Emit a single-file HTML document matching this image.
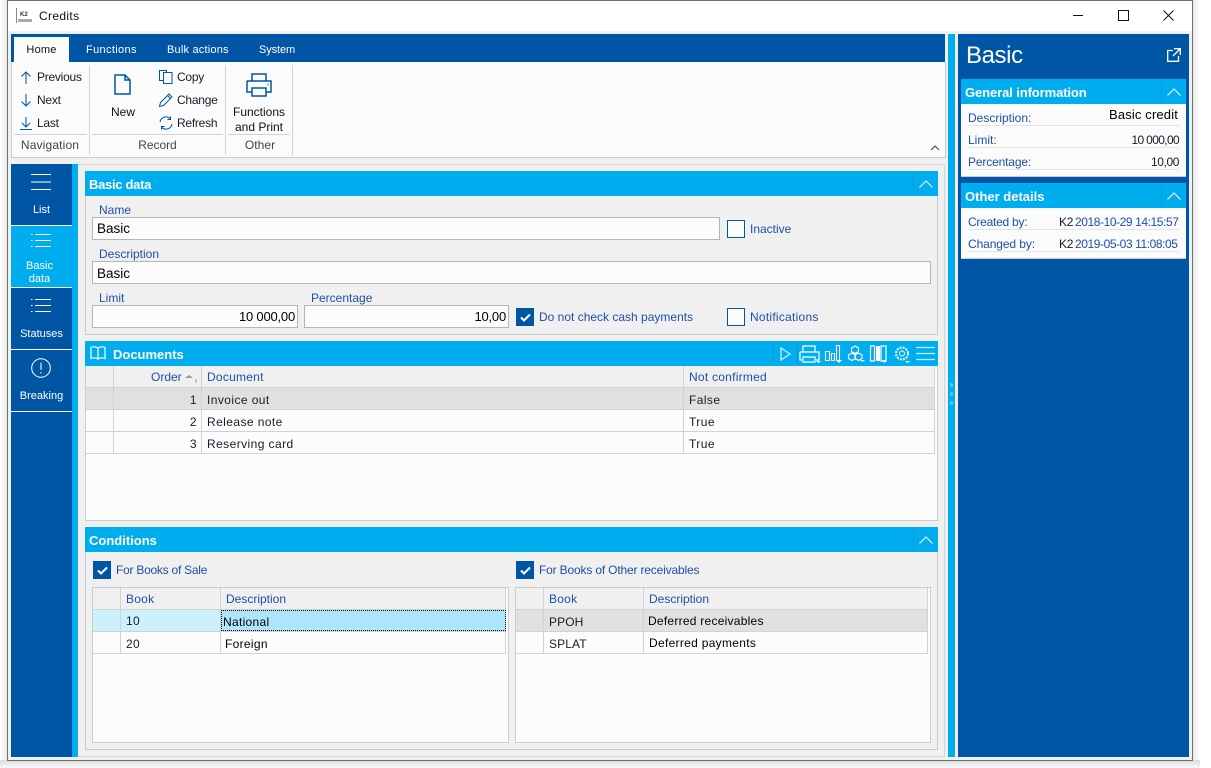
<!DOCTYPE html>
<html><head><meta charset="utf-8"><title>Credits</title>
<style>
html,body{margin:0;padding:0;width:1211px;height:768px;overflow:hidden;background:#fff}
body{position:relative;font-family:"Liberation Sans",sans-serif;font-size:12px;color:#111}
div,span,svg{position:absolute;box-sizing:border-box}
.t{white-space:nowrap;line-height:14px}
.l{color:#1f4fa8;letter-spacing:0}
.b{color:#1a1a2a;letter-spacing:.3px}
.d{letter-spacing:.42px}
.rb{color:#1a1a2a;letter-spacing:-.25px}
.w{color:#fff;letter-spacing:0}
.c{text-align:center}
.r{text-align:right}
.h{background:#00adef;color:#fff;font-weight:bold;font-size:13px;line-height:27px;padding-left:4px;letter-spacing:0}
.bx{border:1px solid #ccc}
.i{background:#fcfcfc;border:1px solid #b5b5b5;font-size:13.500px;line-height:21px;color:#000;padding:0 3px 0 4px;white-space:nowrap}
.n{font-size:13px;letter-spacing:-.2px;padding-right:2px}
.cb{width:18px;height:18px;border:1px solid #0055a5;background:#fcfcfc}
.cb.on{background:#0055a5}
.ln{background:#d2d2d2}
svg{overflow:visible;fill:none}
</style></head><body>

<!-- window frame -->
<div style="left:0;top:0;width:7px;height:768px;background:linear-gradient(90deg,#fff,#e8e8e8)"></div>
<div style="left:1192px;top:0;width:8px;height:768px;background:linear-gradient(90deg,#e8e8e8,#fff)"></div>
<div style="left:0;top:760px;width:1200px;height:8px;background:linear-gradient(#dcdcdc,#fafafa)"></div>
<div style="left:7px;top:0;width:1186px;height:761px;border:1px solid #6e6e6e;background:#f0f0f0"></div>
<div style="left:8px;top:1px;width:1184px;height:30px;background:#fff"></div>

<!-- title -->
<div style="left:16px;top:8px;width:1px;height:15px;background:#888"></div>
<div class="t" style="left:20px;top:11px;font-size:6px;font-weight:bold;color:#333;line-height:8px">K2</div>
<div style="left:18px;top:19px;width:14px;height:3px;background:#aaa"></div>
<div class="t" style="left:39px;top:9px;color:#111;font-size:12px;letter-spacing:.35px">Credits</div>
<div style="left:1073px;top:15px;width:10px;height:1px;background:#111"></div>
<div style="left:1118px;top:10px;width:11px;height:11px;border:1px solid #111"></div>
<svg style="left:1163px;top:10px" width="11" height="11"><path d="M.5.5l10 10M10.500.5l-10 10" stroke="#111"/></svg>

<!-- ribbon -->
<div style="left:11px;top:34px;width:934px;height:28px;background:#0055a5"></div>
<div style="left:14px;top:37px;width:55px;height:25px;background:#fbfbfb"></div>
<div class="t c" style="left:14px;top:43px;width:55px;font-size:11px;letter-spacing:.2px;color:#111">Home</div>
<div class="t w" style="left:86px;top:43px;font-size:11px;letter-spacing:.35px">Functions</div>
<div class="t w" style="left:167px;top:43px;font-size:11px;letter-spacing:.2px">Bulk actions</div>
<div class="t w" style="left:259px;top:43px;font-size:11px;letter-spacing:-.1px">System</div>
<div style="left:11px;top:62px;width:935px;height:96px;background:#fbfbfb;border:1px solid #ccc;border-top:0"></div>
<div class="ln" style="left:89px;top:65px;width:1px;height:90px"></div>
<div class="ln" style="left:225px;top:65px;width:1px;height:90px"></div>
<div class="ln" style="left:292px;top:65px;width:1px;height:90px"></div>
<div class="ln" style="left:14px;top:134px;width:73px;height:1px"></div>
<div class="ln" style="left:92px;top:134px;width:131px;height:1px"></div>
<div class="ln" style="left:228px;top:134px;width:62px;height:1px"></div>

<svg style="left:20px;top:71px" width="12" height="13"><path d="M6 13V1M1.500 5.500L6 1l4.500 4.500" stroke="#0055a5"/></svg>
<svg style="left:20px;top:94px" width="12" height="13"><path d="M6 0v12M1.500 7.500L6 12l4.500-4.500" stroke="#0055a5"/></svg>
<svg style="left:20px;top:117px" width="12" height="13"><path d="M6 0v10M2 6l4 4 4-4M0 12.500h12" stroke="#0055a5"/></svg>
<div class="t rb" style="left:37px;top:70px">Previous</div>
<div class="t rb" style="left:37px;top:93px">Next</div>
<div class="t rb" style="left:37px;top:116px">Last</div>
<div class="t c" style="left:11px;top:138px;width:78px;color:#444;letter-spacing:.15px">Navigation</div>

<svg style="left:114px;top:74px" width="17" height="21"><path d="M1 1h10l5 5v14H1zM11 1v5h5" stroke="#0055a5" stroke-width="1.500"/></svg>
<div class="t c" style="left:103px;top:105px;width:40px">New</div>
<svg style="left:159px;top:70px" width="14" height="14"><path d="M4.500 2.500h8.500v11H4.500zM4.500 10.500H.5V.5h7v2" stroke="#0055a5"/></svg>
<svg style="left:159px;top:93px" width="14" height="14"><path d="M.5 13.500l1-4L10 1l3 3-8.500 8.500zM8.500 2.500l3 3" stroke="#0055a5"/></svg>
<svg style="left:159px;top:116px" width="14" height="14"><path d="M1 6a6 6 0 0 1 10.500-3M13 8a6 6 0 0 1-10.500 3M11.500 .5v3h-3M2.500 13.500v-3h3" stroke="#0055a5"/></svg>
<div class="t rb" style="left:177px;top:70px">Copy</div>
<div class="t rb" style="left:177px;top:93px">Change</div>
<div class="t rb" style="left:177px;top:116px">Refresh</div>
<div class="t c" style="left:92px;top:138px;width:131px;color:#444;letter-spacing:-.05px">Record</div>

<svg style="left:245px;top:73px" width="28" height="24"><path d="M7 8V1h14v7M2 8h24v11h-5M7 19H2V8M7 15h14v8H7zM22.500 11.500h1" stroke="#0055a5" stroke-width="1.500"/></svg>
<div class="t c" style="left:226px;top:105px;width:66px">Functions</div>
<div class="t c" style="left:226px;top:120px;width:66px">and Print</div>
<div class="t c" style="left:227px;top:138px;width:66px;color:#444;letter-spacing:.05px">Other</div>
<svg style="left:930px;top:145px" width="10" height="6"><path d="M1 5l4-4 4 4" stroke="#444"/></svg>

<!-- left nav -->
<div style="left:11px;top:164px;width:61px;height:593px;background:#0055a5"></div>
<div style="left:72px;top:164px;width:6px;height:593px;background:#00adef"></div>
<div style="left:11px;top:226px;width:61px;height:61px;background:#00adef"></div>
<div style="left:11px;top:225px;width:61px;height:1px;background:#fff"></div>
<div style="left:11px;top:287px;width:61px;height:1px;background:#fff"></div>
<div style="left:11px;top:349px;width:61px;height:1px;background:#fff"></div>
<div style="left:11px;top:411px;width:61px;height:1px;background:#fff"></div>
<svg style="left:31px;top:174px" width="20" height="17"><path d="M0 .500h20M0 8h20M0 15.500h20" stroke="#fff"/></svg>
<div class="t c w" style="left:11px;top:203px;width:61px;font-size:11px">List</div>
<svg style="left:31px;top:234px" width="20" height="14"><path d="M4 .500h16M4 6.500h16M4 12.500h16M0 .500h1.500M0 6.500h1.500M0 12.500h1.500" stroke="#fff"/></svg>
<div class="t c w" style="left:9px;top:260px;width:61px;font-size:11px;line-height:13px">Basic<br>data</div>
<svg style="left:31px;top:299px" width="20" height="14"><path d="M4 .500h16M4 6.500h16M4 12.500h16M0 .500h1.500M0 6.500h1.500M0 12.500h1.500" stroke="#fff"/></svg>
<div class="t c w" style="left:11px;top:327px;width:61px;font-size:11px">Statuses</div>
<svg style="left:31px;top:358px" width="20" height="20"><circle cx="10" cy="10" r="9.300" stroke="#fff"/><path d="M10 4.500v7.500M10 14v1.500" stroke="#fff"/></svg>
<div class="t c w" style="left:11px;top:389px;width:61px;font-size:11px">Breaking</div>

<!-- main -->
<div style="left:78px;top:164px;width:867px;height:1px;background:#d6d6d6"></div>
<div style="left:78px;top:756px;width:867px;height:1px;background:#d6d6d6"></div>
<div style="left:944px;top:164px;width:1px;height:593px;background:#d6d6d6"></div>

<!-- Basic data -->
<div class="bx" style="left:85px;top:171px;width:853px;height:164px"></div>
<div class="h" style="left:85px;top:171px;width:853px;height:25px;letter-spacing:-.3px">Basic data</div>
<div style="left:913px;top:173px;width:1px;height:21px;background:#0a96d6"></div>
<svg style="left:919px;top:180px" width="14" height="8"><path d="M.500 7.500L7 1l6.500 6.500" stroke="#fff"/></svg>

<div class="t l" style="left:99px;top:203px">Name</div>
<div class="i" style="left:92px;top:217px;width:628px;height:23px">Basic</div>
<div class="cb" style="left:727px;top:220px"></div>
<div class="t l" style="left:750px;top:222px">Inactive</div>
<div class="t l" style="left:99px;top:247px">Description</div>
<div class="i" style="left:92px;top:261px;width:839px;height:23px;line-height:23px">Basic</div>
<div class="t l" style="left:99px;top:291px">Limit</div>
<div class="i r n" style="left:92px;top:305px;width:206px;height:23px">10 000,00</div>
<div class="t l" style="left:311px;top:291px">Percentage</div>
<div class="i r n" style="left:304px;top:305px;width:205px;height:23px">10,00</div>
<div class="cb on" style="left:516px;top:308px"><svg style="left:3px;top:4px" width="11" height="9"><path d="M1 4.500l3 3 6-6" stroke="#fff" stroke-width="2"/></svg></div>
<div class="t l" style="left:539px;top:310px">Do not check cash payments</div>
<div class="cb" style="left:727px;top:308px"></div>
<div class="t l" style="left:750px;top:310px;letter-spacing:.25px">Notifications</div>

<!-- Documents -->
<div class="bx" style="left:85px;top:341px;width:853px;height:180px;background:#fcfcfc"></div>
<div class="h" style="left:85px;top:341px;width:853px;height:25px;padding-left:28px">Documents</div>
<svg style="left:90px;top:345px" width="17" height="17"><path d="M8 3C6 1.500 3 1.500 1 2.500v11c2-1 5-1 7 .5 2-1.500 5-1.500 7-.5v-11c-2-1-5-1-7 .5zM8 3v11" stroke="#fff" stroke-width="1.200"/></svg>
<!-- toolbar -->
<svg style="left:773px;top:345px" width="165" height="18">
<path d="M.500 0v18M24.500 0v18M140.500 0v18" stroke="#0a96d6"/>
<path d="M8 3l9 6-9 6z" stroke="#c8effc" stroke-width="1.300"/>
<path d="M30 7V1h12v6M27 7h19v8h-3M29 15h-2V7M30 12h12v5H30z" stroke="#fff" stroke-width="1.200"/>
<path d="M43 16h5l-2.500 2z" fill="#fff"/>
<path d="M52.500 6.500h4v9h-4zM58.500 8.500h3v7h-3zM63.500 .5h3v15h-3z" stroke="#fff" stroke-width="1.100"/>
<path d="M63 15h6l-3 3z" fill="#fff"/>
<path d="M82 1l3.500 2v3.500L82 8.500l-3.500-2V3zM79 8l3.500 2v3.500L79 15.500l-3.500-2V10zM85.500 8l3.500 2v3.500l-3.500 2-3.500-2V10z" stroke="#fff" stroke-width="1.100"/>
<path d="M87 15h5l-2.500 2z" fill="#fff"/>
<path d="M97.500 1h4v15h-4zM108 1h5v15h-5z" stroke="#fff" stroke-width="1.200"/><path d="M103 1h4v15h-4z" fill="#fff"/>
<path d="M109 15h5l-2.500 3z" fill="#fff"/>
<circle cx="129" cy="8.500" r="6" stroke="#fff" stroke-width="2" stroke-dasharray="2 1.200"/><circle cx="129" cy="8.500" r="2.500" stroke="#fff"/>
<path d="M132 16h5l-2.500 2z" fill="#fff"/>
<path d="M143 2.500h19M143 8.500h19M143 14.500h19" stroke="#c8effc" stroke-width="1.300"/>
</svg>
<!-- doc table -->
<div style="left:86px;top:366px;width:849px;height:22px;background:#f0f0f0"></div>
<div style="left:86px;top:388px;width:849px;height:21px;background:#e0e0e0"></div>
<div class="ln" style="left:86px;top:387px;width:849px;height:1px"></div>
<div class="ln" style="left:86px;top:409px;width:849px;height:1px"></div>
<div class="ln" style="left:86px;top:431px;width:849px;height:1px"></div>
<div class="ln" style="left:86px;top:453px;width:849px;height:1px"></div>
<div class="ln" style="left:113px;top:366px;width:1px;height:88px"></div>
<div class="ln" style="left:201px;top:366px;width:1px;height:88px"></div>
<div class="ln" style="left:683px;top:366px;width:1px;height:88px"></div>
<div class="ln" style="left:934px;top:366px;width:1px;height:88px"></div>
<div class="t l" style="left:151px;top:370px">Order</div>
<svg style="left:185px;top:374px" width="14" height="10"><path d="M0 4l4-3 4 3z" fill="#999"/><path d="M11 5v4" stroke="#999"/></svg>
<div class="t l" style="left:207px;top:370px;letter-spacing:.25px">Document</div>
<div class="t l" style="left:689px;top:370px;letter-spacing:.25px">Not confirmed</div>
<div class="t r b d" style="left:114px;top:393px;width:83px">1</div><div class="t b d" style="left:207px;top:393px">Invoice out</div><div class="t b d" style="left:689px;top:393px">False</div>
<div class="t r b d" style="left:114px;top:415px;width:83px">2</div><div class="t b d" style="left:207px;top:415px">Release note</div><div class="t b d" style="left:689px;top:415px">True</div>
<div class="t r b d" style="left:114px;top:437px;width:83px">3</div><div class="t b d" style="left:207px;top:437px">Reserving card</div><div class="t b d" style="left:689px;top:437px">True</div>

<!-- Conditions -->
<div class="bx" style="left:85px;top:527px;width:853px;height:223px"></div>
<div class="h" style="left:85px;top:527px;width:853px;height:25px">Conditions</div>
<div style="left:913px;top:529px;width:1px;height:21px;background:#0a96d6"></div>
<svg style="left:919px;top:536px" width="14" height="8"><path d="M.500 7.500L7 1l6.500 6.500" stroke="#fff"/></svg>
<div class="cb on" style="left:93px;top:561px"><svg style="left:3px;top:4px" width="11" height="9"><path d="M1 4.500l3 3 6-6" stroke="#fff" stroke-width="2"/></svg></div>
<div class="t l" style="left:116px;top:563px;letter-spacing:-.25px">For Books of Sale</div>
<div class="cb on" style="left:516px;top:561px"><svg style="left:3px;top:4px" width="11" height="9"><path d="M1 4.500l3 3 6-6" stroke="#fff" stroke-width="2"/></svg></div>
<div class="t l" style="left:539px;top:563px;letter-spacing:-.17px">For Books of Other receivables</div>

<!-- left table -->
<div class="bx" style="left:92px;top:587px;width:417px;height:156px;background:#fcfcfc"></div>
<div style="left:93px;top:588px;width:413px;height:21px;background:#f0f0f0"></div>
<div style="left:93px;top:610px;width:127px;height:21px;background:#ccf0fc"></div>
<div style="left:221px;top:610px;width:285px;height:21px;background:#aee5fb;border:1px dotted #000"></div>
<div class="ln" style="left:93px;top:609px;width:413px;height:1px"></div>
<div class="ln" style="left:93px;top:631px;width:413px;height:1px"></div>
<div class="ln" style="left:93px;top:653px;width:413px;height:1px"></div>
<div class="ln" style="left:120px;top:588px;width:1px;height:66px"></div>
<div class="ln" style="left:220px;top:588px;width:1px;height:66px"></div>
<div class="ln" style="left:505px;top:631px;width:1px;height:23px"></div>
<div class="ln" style="left:505px;top:588px;width:1px;height:22px"></div>
<div class="t l" style="left:126px;top:592px;letter-spacing:.25px">Book</div>
<div class="t l" style="left:226px;top:592px">Description</div>
<div class="t b" style="left:126px;top:614px">10</div><div class="t b" style="left:223px;top:615px;color:#000">National</div>
<div class="t b" style="left:126px;top:637px">20</div><div class="t b" style="left:225px;top:637px;color:#000">Foreign</div>

<!-- right table -->
<div class="bx" style="left:515px;top:587px;width:416px;height:156px;background:#fcfcfc"></div>
<div style="left:516px;top:588px;width:411px;height:21px;background:#f0f0f0"></div>
<div style="left:516px;top:610px;width:411px;height:21px;background:#e0e0e0"></div>
<div class="ln" style="left:516px;top:609px;width:411px;height:1px"></div>
<div class="ln" style="left:516px;top:631px;width:411px;height:1px"></div>
<div class="ln" style="left:516px;top:653px;width:411px;height:1px"></div>
<div class="ln" style="left:543px;top:588px;width:1px;height:66px"></div>
<div class="ln" style="left:643px;top:588px;width:1px;height:66px"></div>
<div class="ln" style="left:927px;top:588px;width:1px;height:66px"></div>
<div class="t l" style="left:549px;top:592px;letter-spacing:.25px">Book</div>
<div class="t l" style="left:649px;top:592px">Description</div>
<div class="t b" style="left:549px;top:615px;letter-spacing:.1px">PPOH</div><div class="t b" style="left:648px;top:614px;color:#000;letter-spacing:.25px">Deferred receivables</div>
<div class="t b" style="left:549px;top:637px;letter-spacing:.1px">SPLAT</div><div class="t b" style="left:649px;top:636px;color:#000">Deferred payments</div>

<!-- splitter -->
<div style="left:948px;top:34px;width:7px;height:723px;background:#00adef"></div>
<div style="left:950px;top:383px;width:3px;height:4px;border-radius:2px;background:#5cc8f2"></div>
<div style="left:950px;top:392px;width:3px;height:4px;border-radius:2px;background:#5cc8f2"></div>
<div style="left:950px;top:401px;width:3px;height:4px;border-radius:2px;background:#5cc8f2"></div>

<!-- right panel -->
<div style="left:958px;top:34px;width:231px;height:723px;background:#0055a5"></div>
<div class="t" style="left:966px;top:42px;font-size:24px;line-height:28px;color:#fff;letter-spacing:-.4px">Basic</div>
<svg style="left:1167px;top:48px" width="14" height="14"><path d="M6 2.500H.700v10.800h10.800V8M7 .700h6.300V7M13 1L6 8" stroke="#fff" stroke-width="1.300"/></svg>

<div style="left:961px;top:79px;width:225px;height:98px;background:#fbfbfb;border-bottom:1px solid #ccc"></div>
<div class="h" style="left:961px;top:79px;width:225px;height:25px;letter-spacing:-.1px">General information</div>
<div style="left:1161px;top:81px;width:1px;height:21px;background:#0a96d6"></div>
<svg style="left:1167px;top:88px" width="14" height="8"><path d="M.500 7.500L7 1l6.500 6.500" stroke="#fff"/></svg>
<div class="t l" style="left:968px;top:111px">Description:</div>
<div class="t r" style="left:1060px;top:108px;width:118px;color:#000;font-size:13px;letter-spacing:.15px">Basic credit</div>
<div style="left:968px;top:125px;width:211px;height:1px;background:#e4e4e4"></div>
<div class="t l" style="left:968px;top:133px">Limit:</div>
<div class="t r b" style="left:1060px;top:133px;width:119px;letter-spacing:-.65px">10 000,00</div>
<div style="left:968px;top:147px;width:211px;height:1px;background:#e4e4e4"></div>
<div class="t l" style="left:968px;top:155px;letter-spacing:-.15px">Percentage:</div>
<div class="t r b" style="left:1060px;top:155px;width:119px;letter-spacing:-.4px">10,00</div>
<div style="left:968px;top:169px;width:211px;height:1px;background:#e4e4e4"></div>

<div style="left:961px;top:183px;width:225px;height:76px;background:#fbfbfb;border-bottom:1px solid #ccc"></div>
<div class="h" style="left:961px;top:183px;width:225px;height:25px">Other details</div>
<div style="left:1161px;top:185px;width:1px;height:21px;background:#0a96d6"></div>
<svg style="left:1167px;top:192px" width="14" height="8"><path d="M.500 7.500L7 1l6.500 6.500" stroke="#fff"/></svg>
<div class="t l" style="left:968px;top:215px;letter-spacing:-.25px">Created by:</div>
<div class="t" style="left:1059px;top:215px;letter-spacing:-.2px;color:#1a1a2a">K2</div>
<div class="t" style="left:1075px;top:215px;color:#1f4fa8;letter-spacing:-.42px">2018-10-29 14:15:57</div>
<div style="left:968px;top:229px;width:211px;height:1px;background:#e4e4e4"></div>
<div class="t l" style="left:968px;top:237px;letter-spacing:-.1px">Changed by:</div>
<div class="t" style="left:1059px;top:237px;letter-spacing:-.2px;color:#1a1a2a">K2</div>
<div class="t" style="left:1075px;top:237px;color:#1f4fa8;letter-spacing:-.42px">2019-05-03 11:08:05</div>
<div style="left:968px;top:251px;width:211px;height:1px;background:#e4e4e4"></div>

</body></html>
